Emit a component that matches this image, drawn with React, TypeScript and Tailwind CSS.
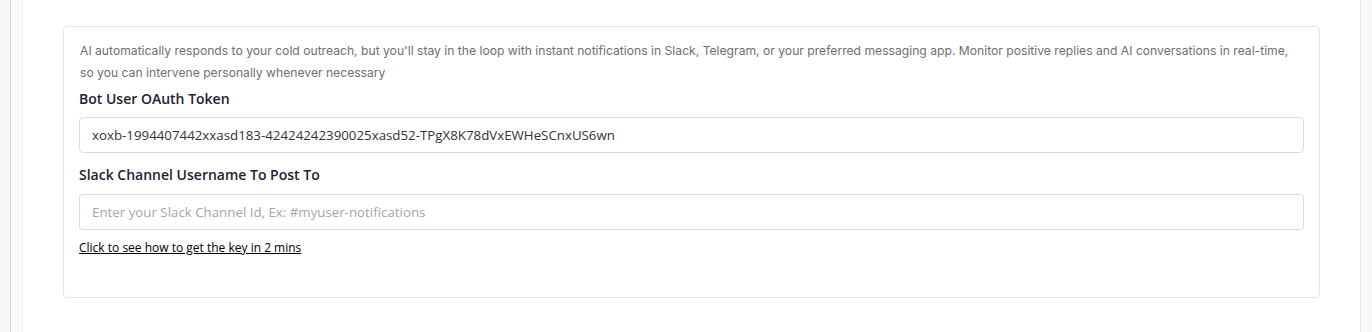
const App = () => {
  return (
    <div className="flex w-[1372px] h-[332px] bg-white overflow-hidden">
      <div className="w-[11px] h-full bg-[#f7f7f7] border-r border-[#d6d6d6] shrink-0" />
      <div className="w-[12px] h-full bg-[#fafafa] border-r border-[#eeeeee] shrink-0" />
      <div className="flex-1 px-10 pt-[26px]">
        <div className="rounded-[4px] border border-[#e6e6e6] bg-white px-[15px] pt-[13px] pb-[39px]">
          <p className="font-['Inter',sans-serif] text-[12.15px] leading-[22px] text-[#6f6f6f] pl-px pr-[8px]">
            AI automatically responds to your cold outreach, but you'll stay in the loop with instant notifications in Slack, Telegram, or your preferred messaging app. Monitor positive replies and AI conversations in real-time, so you can intervene personally whenever necessary
          </p>
          <label className="block mt-[4px] font-['Open_Sans',sans-serif] font-semibold text-[14px] leading-[22px] text-[#1f2233]">
            Bot User OAuth Token
          </label>
          <input
            className="mt-[7px] block w-full h-[36px] rounded-[4px] border border-[#dcdcdc] px-3 font-['Open_Sans',sans-serif] text-[13.3px] text-[#333333] outline-none"
            defaultValue="xoxb-1994407442xxasd183-42424242390025xasd52-TPgX8K78dVxEWHeSCnxUS6wn"
          />
          <label className="block mt-[11px] font-['Open_Sans',sans-serif] font-semibold text-[14px] leading-[22px] text-[#1f2233]">
            Slack Channel Username To Post To
          </label>
          <input
            className="mt-[8px] block w-full h-[36px] rounded-[4px] border border-[#dcdcdc] px-3 font-['Open_Sans',sans-serif] text-[13.3px] text-[#333333] placeholder:text-[#a6a6a6] outline-none"
            placeholder="Enter your Slack Channel Id, Ex: #myuser-notifications"
          />
          <a className="inline-block mt-[9px] font-['Open_Sans',sans-serif] text-[12px] leading-[18px] text-black underline cursor-pointer">
            Click to see how to get the key in 2 mins
          </a>
        </div>
      </div>
      <div className="w-[12px] h-full bg-[#f8f8f8] border-l border-[#e8e8e8] shrink-0" />
    </div>
  );
};

export default App;
